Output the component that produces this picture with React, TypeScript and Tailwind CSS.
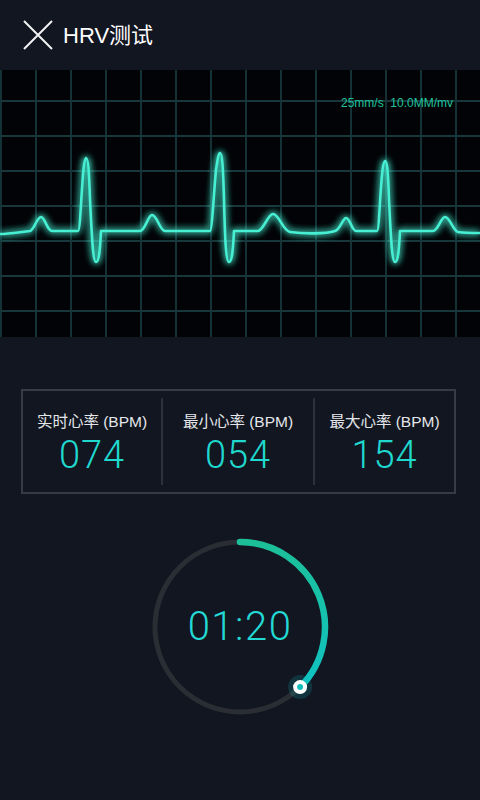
import React from "react";

const SANS = { fontFamily: '"Liberation Sans", "Noto Sans CJK SC", sans-serif' };
const NUM = { fontFamily: 'Roboto, "Liberation Sans", sans-serif' };

const ECG_PATH =
  "M0,234 C10,234 20,232 30,231 C34,230 37,217 41,217 C45,217 47,231 52,231 L78,231 " +
  "C80,231 81,200 83,175 C84,162 85,158 86,158 C88,158 89,170 90,200 C92,240 93,262 96,262 C99,262 100,250 101,231 L140,231 " +
  "C145,231 148,215 152,215 C157,215 160,231 165,231 L210,231 " +
  "C212,231 214,190 216,170 C218,156 219,153 220,153 C222,153 223,165 224,200 C225,240 226,262 229,262 C232,262 233,250 234,231 L258,231 " +
  "C263,231 268,214 273,214 C279,214 283,231 290,232 C305,234 325,234 335,231 " +
  "C340,230 343,218 346,218 C350,218 352,231 356,231 L377,231 " +
  "C379,231 380,195 382,175 C383,164 384,161 385,161 C387,161 388,170 389,200 C391,240 392,262 395,262 C398,262 399,250 400,231 L433,231 " +
  "C438,231 441,217 445,217 C450,217 453,231 458,232 C465,233 475,233 480,233";

function EcgPanel() {
  const vx = Array.from({ length: 14 }, (_, k) => 1 + 35 * k);
  const hy = [101, 136, 171, 206, 241, 276, 311];
  return (
    <div className="relative h-[267px] bg-[#020306]">
      <svg className="block" width="480" height="267" viewBox="0 70 480 267">
        <defs>
          <filter id="glow" x="-10%" y="-20%" width="120%" height="140%">
            <feGaussianBlur stdDeviation="3.5" result="b" />
            <feMerge>
              <feMergeNode in="b" />
              <feMergeNode in="b" />
              <feMergeNode in="SourceGraphic" />
            </feMerge>
          </filter>
        </defs>
        {vx.map((x) => (
          <line key={"v" + x} x1={x} y1={70} x2={x} y2={337} stroke="#17373b" strokeWidth="1.8" />
        ))}
        {hy.map((y) => (
          <line key={"h" + y} x1={0} y1={y} x2={480} y2={y} stroke="#17373b" strokeWidth="1.8" />
        ))}
        <path d={ECG_PATH} fill="none" stroke="#46efd3" strokeWidth="2.6" strokeLinejoin="round" filter="url(#glow)" />
      </svg>
      <div className="absolute left-[341px] top-[24px] text-[12px] text-[#20c29c]" style={SANS}>
        25mm/s&nbsp;&nbsp;10.0MM/mv
      </div>
    </div>
  );
}

function Stat({ label, value, className }: { label: string; value: string; className: string }) {
  return (
    <div className={`flex flex-col items-center pt-[21px] ${className}`}>
      <div className="text-[15.5px] leading-[19px] text-[#e4e6ea]" style={SANS}>
        {label}
      </div>
      <div className="mt-[4px] text-[38px] font-light leading-[40px] tracking-[1px] text-[#1fd9cf]" style={NUM}>
        {value}
      </div>
    </div>
  );
}

function Timer() {
  return (
    <div className="relative mx-auto h-[190px] w-[190px]">
      <svg width="190" height="190" viewBox="0 0 190 190" className="block">
        <defs>
          <linearGradient id="prog" x1="0" y1="0" x2="0" y2="1">
            <stop offset="0" stopColor="#1cbf98" />
            <stop offset="1" stopColor="#10c3c2" />
          </linearGradient>
        </defs>
        <circle cx="95" cy="95" r="85" fill="none" stroke="#2a2d33" strokeWidth="5" />
        <path d="M95,10 A85,85 0 0 1 155.1,155.1" fill="none" stroke="url(#prog)" strokeWidth="6.5" strokeLinecap="round" />
        <circle cx="155.1" cy="155.1" r="12" fill="#12c2c0" opacity="0.18" />
        <circle cx="155.1" cy="155.1" r="7" fill="#ffffff" />
        <circle cx="155.1" cy="155.1" r="3" fill="#13bfbd" />
      </svg>
      <div
        className="absolute inset-0 flex items-center justify-center text-[40px] font-light tracking-[1.5px] text-[#22d9d4]"
        style={NUM}
      >
        01:20
      </div>
    </div>
  );
}

export default function App() {
  return (
    <div className="flex h-[800px] w-[480px] flex-col bg-[#121621]">
      <div className="flex h-[70px] items-center pl-[23px]">
        <svg width="30" height="30" viewBox="0 0 30 30" className="block">
          <path d="M1,1 L29,29 M29,1 L1,29" stroke="#f2f2f2" strokeWidth="2" />
        </svg>
        <span className="ml-[10px] text-[22px] text-white" style={SANS}>
          HRV测试
        </span>
      </div>
      <EcgPanel />
      <div className="ml-[21px] mr-[24px] mt-[52px] flex h-[105px] border-2 border-[#363b45]">
        <Stat label="实时心率 (BPM)" value="074" className="w-[138px]" />
        <div className="my-[7px] w-[2px] bg-[#2c313a]" />
        <Stat label="最小心率 (BPM)" value="054" className="flex-1" />
        <div className="my-[7px] w-[2px] bg-[#2c313a]" />
        <Stat label="最大心率 (BPM)" value="154" className="w-[139px]" />
      </div>
      <div className="mt-[38px]">
        <Timer />
      </div>
    </div>
  );
}
